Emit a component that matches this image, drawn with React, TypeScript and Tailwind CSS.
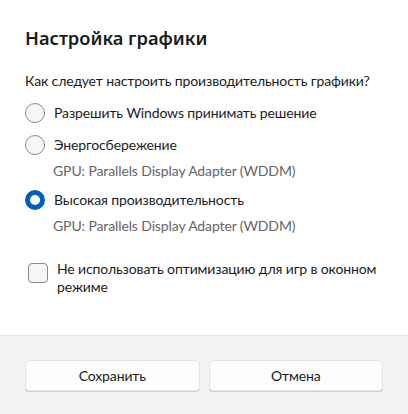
import React from "react";

function Radio({ checked }: { checked?: boolean }) {
  if (checked) {
    return (
      <span className="flex h-5 w-5 shrink-0 items-center justify-center rounded-full bg-[#005fb8]">
        <span className="h-[10px] w-[10px] rounded-full bg-white" />
      </span>
    );
  }
  return <span className="h-5 w-5 shrink-0 rounded-full border border-[#8a8a8a] bg-[#f6f6f6]" />;
}

export default function App() {
  return (
    <div className="flex h-[414px] w-[408px] flex-col overflow-hidden bg-white text-[#1b1b1b] tracking-[-0.12px]" style={{ fontFamily: 'Lato, "Noto Sans", sans-serif' }}>
      <div className="flex-1 px-[25px] pt-[24px]">
        <h1 className="text-[18.3px] font-semibold leading-[28px] tracking-normal" style={{ fontFamily: '"Noto Sans", sans-serif' }}>Настройка графики</h1>
        <p className="mt-[19px] text-[14px] leading-5">Как следует настроить производительность графики?</p>
        <div className="mt-[6px] flex flex-col">
          <div className="flex h-8 items-center gap-[9px]">
            <Radio />
            <span className="text-[14px] leading-5">Разрешить Windows принимать решение</span>
          </div>
          <div className="flex h-8 items-center gap-[9px]">
            <Radio />
            <span className="text-[14px] leading-5">Энергосбережение</span>
          </div>
          <div className="mb-[3px] pl-[28px] text-[14px] leading-5 text-[#666666]">GPU: Parallels Display Adapter (WDDM)</div>
          <div className="flex h-8 items-center gap-[9px]">
            <Radio checked />
            <span className="text-[14px] leading-5">Высокая производительность</span>
          </div>
          <div className="pl-[28px] text-[14px] leading-5 text-[#666666]">GPU: Parallels Display Adapter (WDDM)</div>
        </div>
        <div className="-mr-[12px] mt-[24px] flex items-start gap-[9px] pl-[3px]">
          <span className="mt-[3px] h-5 w-5 shrink-0 rounded-[4px] border border-[#8a8a8a] bg-[#f6f6f6]" />
          <span className="text-[14px] leading-[18px]">Не использовать оптимизацию для игр в оконном режиме</span>
        </div>
      </div>
      <div className="flex h-[79px] gap-[9px] border-t border-[#e5e5e5] bg-[#f3f3f3] px-[25px] pt-[24px]">
        <button className="h-[31px] flex-1 rounded-[4px] border border-[#e5e5e5] bg-[#fdfdfd] text-[14px] shadow-[0_1px_0_#d0d0d0]">Сохранить</button>
        <button className="h-[31px] flex-1 rounded-[4px] border border-[#e5e5e5] bg-[#fdfdfd] text-[14px] shadow-[0_1px_0_#d0d0d0]">Отмена</button>
      </div>
    </div>
  );
}
